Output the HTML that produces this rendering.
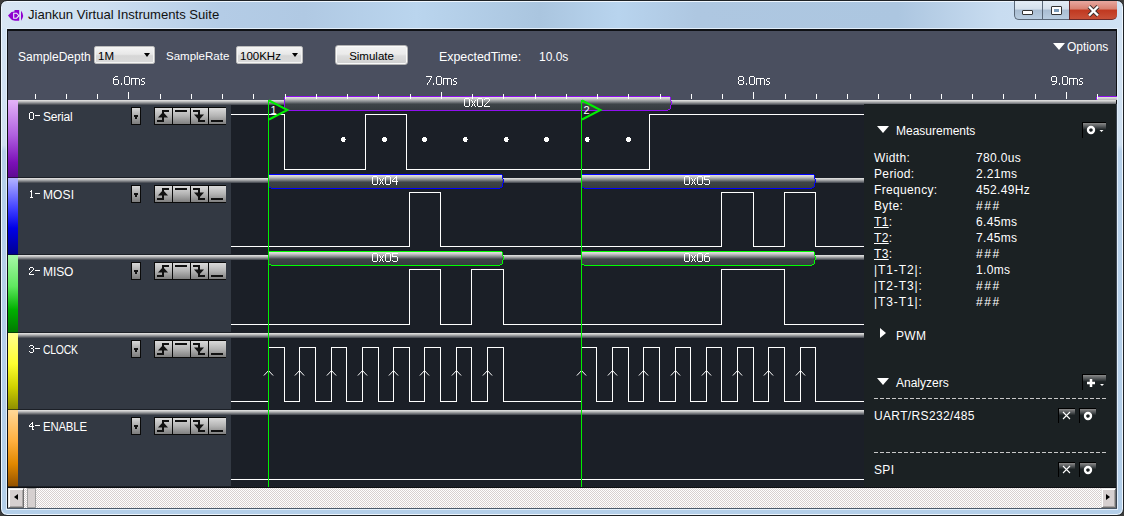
<!DOCTYPE html>
<html><head><meta charset="utf-8"><style>
*{box-sizing:border-box}
body{margin:0;width:1124px;height:516px;overflow:hidden;position:relative;background:#3c3c3c;font-family:"Liberation Sans",sans-serif}
.abs{position:absolute}
#frame{position:absolute;left:0;top:0;width:1124px;height:516px;border:1px solid #1e2226;border-radius:7px;background:linear-gradient(#d4e4f4 0,#cfe0f1 144px,#b6d0ea 150px,#b4cfe9 100%);box-shadow:inset 0 0 0 1px #eef6fe}
#tbar{position:absolute;left:2px;top:2px;width:1120px;height:26px;border-radius:5px 5px 0 0;background:linear-gradient(90deg,#d8e6f4 0%,#cddff1 9%,#b4cce6 19.5%,#b0c9e3 27%,#bad5ee 37%,#aac5df 48%,#b8d4ee 55%,#aec7e1 62%,#acc6e0 80%,#c8dcf0 89%,#d0e2f4 100%)}
#title{position:absolute;left:28px;top:7px;font-size:13.1px;color:#111;letter-spacing:0}
#content{position:absolute;left:7px;top:29px;width:1110px;height:480px;background:#0e1014;box-shadow:0 0 0 1px #e2eefa}
#tb{position:absolute;left:8px;top:31px;width:1108px;height:69px;background:#4a4f5f}
.tt{position:absolute;font-size:12px;color:#fff;white-space:nowrap}
.combo{position:absolute;height:18px;border:1px solid #bcbcbc;border-radius:2px;box-shadow:inset 0 0 0 1px #f4f4f4;background:linear-gradient(#f4f4f4,#e8e8e8 45%,#d6d6d6 55%,#dadada);font-size:11.5px;color:#000;padding-left:3px;line-height:18px}
.combo i{position:absolute;right:4px;top:6px;width:0;height:0;border-left:3.6px solid transparent;border-right:3.6px solid transparent;border-top:4.6px solid #000}
.btn{position:absolute;height:20px;border:1px solid #b4b4b4;border-radius:3px;box-shadow:inset 0 0 0 1px #fafafa;background:linear-gradient(#f2f2f2,#ebebeb 45%,#dddddd 55%,#cfcfcf);font-size:11.5px;color:#000;text-align:center;line-height:20px}
.stripe{position:absolute;left:8px;width:10px}
.lp{position:absolute;left:18px;width:213px;background:#333943}
.wf{position:absolute;left:231px;width:633px;background:#1b1f27}
.bar{position:absolute;left:18px;width:846px;height:5px;background:linear-gradient(#e6e6e6,#c8c8c8 25%,#8a8c90 60%,#3c4048)}
.lbl{position:absolute;font-size:12px;color:#fff;white-space:nowrap;line-height:14px}
.num{font-family:"Liberation Mono",monospace;font-size:11px}
.dd{position:absolute;left:131px;width:10px;height:18px;border:1px solid #0a0a0a;background:linear-gradient(#d8d8d8,#a8a8a8 50%,#7c7c7c)}
.dd i{position:absolute;left:2px;top:7px;width:4px;height:2px;background:#111}
.dd b{position:absolute;left:3px;top:9px;width:2px;height:2px;background:#111}
.bg4{position:absolute;left:154px;width:72px;height:18px;background:#0a0a0a;display:flex;padding:1px;gap:1px}
.bg4 .b{width:17px;height:16px;background:linear-gradient(#dadada,#b4b4b4 50%,#808080)}
.bg4 svg{display:block}
#rp{position:absolute;left:864px;top:104px;width:252px;height:383px;background:#1b2123}
.rt{position:absolute;font-size:12px;color:#fff;white-space:nowrap;letter-spacing:0.35px}
.hh{letter-spacing:1.6px}
.tri-d{position:absolute;width:0;height:0;border-left:6px solid transparent;border-right:6px solid transparent;border-top:7px solid #fff}
.tri-r{position:absolute;width:0;height:0;border-top:5.5px solid transparent;border-bottom:5.5px solid transparent;border-left:6px solid #fff}
.dash{position:absolute;left:874px;width:232px;height:1px;background:repeating-linear-gradient(90deg,#c8c8c8 0 4px,transparent 4px 6px)}
.sb{position:absolute;border-left:1px solid #000;border-top:1px solid #000;background:linear-gradient(#8a8a8a,#505456 25%,#1b2123 45%)}
#scroll{position:absolute;left:8px;top:488px;width:1108px;height:20px;background:repeating-conic-gradient(#fefefe 0 25%,#d8d0d0 0 50%) 0 0/2px 2px}
.sbtn{position:absolute;top:488px;width:16px;height:20px;background:#d6d0d0;border:1px solid #e8e8e8;border-right-color:#707070;border-bottom-color:#707070;box-shadow:inset 1px 1px #fff,inset -1px -1px #a8a4a4}
.st{font-family:"Liberation Sans",sans-serif;font-size:12px;fill:#fff}
.ct{font-family:"Liberation Sans",sans-serif;font-size:11px;fill:#fff}
.wb{position:absolute;top:1px;height:19px;border:1px solid #5a6878;border-top:none;border-right:none}
</style></head><body>
<div id="frame"></div><div id="tbar"></div>
<svg class="abs" style="left:6px;top:6px" width="22" height="18" viewBox="0 0 22 18"><path d="M2 9.5L4 7.5L5.5 6L8.5 5.5L8.5 4H13.2V14.8H9L6 14L4 12Z" fill="#9000d0"/><path d="M7.7 7.2V12.2H10.6L12.9 9.7L10.6 7.2Z" stroke="#e8f4f8" stroke-width="1.1" fill="#9000d0"/><path d="M15 4.8Q19.2 9.7 15 14.7Z" fill="#9000d0"/></svg>
<div id="title">Jiankun Virtual Instruments Suite</div>
<div class="wb" style="left:1014px;width:28px;background:linear-gradient(#e4edf6,#d4e0ec 45%,#a9bdd2 50%,#b9cde0);border-radius:0 0 0 5px"><div class="abs" style="left:7px;top:9px;width:11px;height:5px;background:#fff;border:1px solid #333;border-radius:1px"></div></div>
<div class="wb" style="left:1042px;width:27px;background:linear-gradient(#e4edf6,#d4e0ec 45%,#a9bdd2 50%,#b9cde0)"><div class="abs" style="left:8px;top:5px;width:11px;height:9px;background:#fff;border:1px solid #333;border-radius:1px"><div class="abs" style="left:2px;top:2px;width:5px;height:3px;background:#7a9ab8"></div></div></div>
<div class="wb" style="left:1069px;width:48px;background:linear-gradient(#e8a8a0,#d88070 45%,#c03820 50%,#c85038);border-color:#6a2a2a;border-radius:0 0 5px 0"><svg class="abs" style="left:17px;top:4px" width="13" height="12" viewBox="0 0 13 12"><path d="M2 1.5L11 10.5M11 1.5L2 10.5" stroke="#3a3030" stroke-width="4.2"/><path d="M2 1.5L11 10.5M11 1.5L2 10.5" stroke="#fff" stroke-width="2.4"/></svg></div>
<div id="content"></div>
<div id="tb"></div>
<div class="tt" style="left:18px;top:50px">SampleDepth</div>
<div class="combo" style="left:94px;top:46px;width:61px">1M<i></i></div>
<div class="tt" style="left:166px;top:50px;font-size:11.5px">SampleRate</div>
<div class="combo" style="left:236px;top:46px;width:67px">100KHz<i></i></div>
<div class="btn" style="left:335px;top:45px;width:73px">Simulate</div>
<div class="tt" style="left:439px;top:50px;font-size:12.4px">ExpectedTime:</div>
<div class="tt" style="left:539px;top:50px">10.0s</div>
<div class="tri-d" style="left:1053px;top:43px"></div>
<div class="tt" style="left:1067px;top:40px">Options</div>

<div class="stripe" style="top:100px;height:78px;background:linear-gradient(#e4b4f8,#b060e0 45%,#7c10b8 80%,#5c0a90)"></div>
<div class="lp" style="top:100px;height:78px"></div>
<div class="wf" style="top:100px;height:78px"></div>
<div class="bar" style="top:100px"></div><div class="abs" style="left:8px;top:177px;width:223px;height:1px;background:rgba(10,12,16,0.55)"></div>
<div class="lbl" style="top:110px;left:43px;letter-spacing:-0.2px">Serial</div>
<div class="dd" style="top:107px"><i></i><b></b></div>
<div class="bg4" style="top:107px">
 <div class="b"><svg width="17" height="16"><path d="M2 13H8V3H14" stroke="#111" stroke-width="2" fill="none"/><path d="M3 9.5L13 9.5L8 4Z" fill="#111"/></svg></div>
 <div class="b"><svg width="17" height="16"><rect x="2" y="2" width="12" height="2" fill="#111"/></svg></div>
 <div class="b"><svg width="17" height="16"><path d="M2 3H8V13H14" stroke="#111" stroke-width="2" fill="none"/><path d="M3 6.5L13 6.5L8 12Z" fill="#111"/></svg></div>
 <div class="b"><svg width="17" height="16"><rect x="2" y="12" width="12" height="2" fill="#111"/></svg></div>
</div>
<div class="stripe" style="top:178px;height:77px;background:linear-gradient(#b4b4ff,#4040ff 40%,#0000e8 65%,#00008c)"></div>
<div class="lp" style="top:178px;height:77px"></div>
<div class="wf" style="top:178px;height:77px"></div>
<div class="bar" style="top:178px"></div><div class="abs" style="left:8px;top:254px;width:223px;height:1px;background:rgba(10,12,16,0.55)"></div>
<div class="lbl" style="top:188px;left:43px;letter-spacing:0.1px">MOSI</div>
<div class="dd" style="top:185px"><i></i><b></b></div>
<div class="bg4" style="top:185px">
 <div class="b"><svg width="17" height="16"><path d="M2 13H8V3H14" stroke="#111" stroke-width="2" fill="none"/><path d="M3 9.5L13 9.5L8 4Z" fill="#111"/></svg></div>
 <div class="b"><svg width="17" height="16"><rect x="2" y="2" width="12" height="2" fill="#111"/></svg></div>
 <div class="b"><svg width="17" height="16"><path d="M2 3H8V13H14" stroke="#111" stroke-width="2" fill="none"/><path d="M3 6.5L13 6.5L8 12Z" fill="#111"/></svg></div>
 <div class="b"><svg width="17" height="16"><rect x="2" y="12" width="12" height="2" fill="#111"/></svg></div>
</div>
<div class="stripe" style="top:255px;height:78px;background:linear-gradient(#a8f8a8,#60e860 40%,#00b000 70%,#007800)"></div>
<div class="lp" style="top:255px;height:78px"></div>
<div class="wf" style="top:255px;height:78px"></div>
<div class="bar" style="top:255px"></div><div class="abs" style="left:8px;top:332px;width:223px;height:1px;background:rgba(10,12,16,0.55)"></div>
<div class="lbl" style="top:265px;left:43px;letter-spacing:-0.1px">MISO</div>
<div class="dd" style="top:262px"><i></i><b></b></div>
<div class="bg4" style="top:262px">
 <div class="b"><svg width="17" height="16"><path d="M2 13H8V3H14" stroke="#111" stroke-width="2" fill="none"/><path d="M3 9.5L13 9.5L8 4Z" fill="#111"/></svg></div>
 <div class="b"><svg width="17" height="16"><rect x="2" y="2" width="12" height="2" fill="#111"/></svg></div>
 <div class="b"><svg width="17" height="16"><path d="M2 3H8V13H14" stroke="#111" stroke-width="2" fill="none"/><path d="M3 6.5L13 6.5L8 12Z" fill="#111"/></svg></div>
 <div class="b"><svg width="17" height="16"><rect x="2" y="12" width="12" height="2" fill="#111"/></svg></div>
</div>
<div class="stripe" style="top:333px;height:77px;background:linear-gradient(#ffff90,#ffff30 40%,#d0d000 70%,#8c8c00)"></div>
<div class="lp" style="top:333px;height:77px"></div>
<div class="wf" style="top:333px;height:77px"></div>
<div class="bar" style="top:333px"></div><div class="abs" style="left:8px;top:409px;width:223px;height:1px;background:rgba(10,12,16,0.55)"></div>
<div class="lbl" style="top:343px;left:43px;letter-spacing:-0.3px;transform:scaleX(0.87);transform-origin:0 0">CLOCK</div>
<div class="dd" style="top:340px"><i></i><b></b></div>
<div class="bg4" style="top:340px">
 <div class="b"><svg width="17" height="16"><path d="M2 13H8V3H14" stroke="#111" stroke-width="2" fill="none"/><path d="M3 9.5L13 9.5L8 4Z" fill="#111"/></svg></div>
 <div class="b"><svg width="17" height="16"><rect x="2" y="2" width="12" height="2" fill="#111"/></svg></div>
 <div class="b"><svg width="17" height="16"><path d="M2 3H8V13H14" stroke="#111" stroke-width="2" fill="none"/><path d="M3 6.5L13 6.5L8 12Z" fill="#111"/></svg></div>
 <div class="b"><svg width="17" height="16"><rect x="2" y="12" width="12" height="2" fill="#111"/></svg></div>
</div>
<div class="stripe" style="top:410px;height:77px;background:linear-gradient(#ffd898,#ffb040 40%,#e08800 70%,#905000)"></div>
<div class="lp" style="top:410px;height:77px"></div>
<div class="wf" style="top:410px;height:77px"></div>
<div class="bar" style="top:410px"></div><div class="abs" style="left:8px;top:486px;width:223px;height:1px;background:rgba(10,12,16,0.55)"></div>
<div class="lbl" style="top:420px;left:43px;letter-spacing:-0.2px;transform:scaleX(0.95);transform-origin:0 0">ENABLE</div>
<div class="dd" style="top:417px"><i></i><b></b></div>
<div class="bg4" style="top:417px">
 <div class="b"><svg width="17" height="16"><path d="M2 13H8V3H14" stroke="#111" stroke-width="2" fill="none"/><path d="M3 9.5L13 9.5L8 4Z" fill="#111"/></svg></div>
 <div class="b"><svg width="17" height="16"><rect x="2" y="2" width="12" height="2" fill="#111"/></svg></div>
 <div class="b"><svg width="17" height="16"><path d="M2 3H8V13H14" stroke="#111" stroke-width="2" fill="none"/><path d="M3 6.5L13 6.5L8 12Z" fill="#111"/></svg></div>
 <div class="b"><svg width="17" height="16"><rect x="2" y="12" width="12" height="2" fill="#111"/></svg></div>
</div>
<div class="bar" style="top:100px;left:864px;width:252px"></div>
<div id="rp"></div>
<svg class="abs" style="left:0;top:0" width="1124" height="516">
<defs><linearGradient id="sg" x1="0" y1="0" x2="0" y2="1"><stop offset="0" stop-color="#e6e2e2"/><stop offset="0.15" stop-color="#c8c8c8"/><stop offset="0.38" stop-color="#7c8084"/><stop offset="0.55" stop-color="#3e4448"/><stop offset="1" stop-color="#353b3f"/></linearGradient>
<clipPath id="rc"><rect x="1096" y="90" width="21" height="10"/></clipPath><clipPath id="wc"><rect x="231" y="90" width="633" height="397"/></clipPath></defs>
<g clip-path="url(#wc)" shape-rendering="crispEdges"><rect x="231" y="114" width="54" height="1" fill="#fff"/><rect x="284" y="114" width="1" height="56" fill="#fff"/><rect x="284" y="169" width="82" height="1" fill="#fff"/><rect x="365" y="114" width="1" height="56" fill="#fff"/><rect x="365" y="114" width="42" height="1" fill="#fff"/><rect x="406" y="114" width="1" height="56" fill="#fff"/><rect x="406" y="169" width="244" height="1" fill="#fff"/><rect x="649" y="114" width="1" height="56" fill="#fff"/><rect x="649" y="114" width="215" height="1" fill="#fff"/><circle cx="343.4" cy="139.5" r="2.4" fill="#fff"/><circle cx="384.5" cy="139.5" r="2.4" fill="#fff"/><circle cx="424.5" cy="139.5" r="2.4" fill="#fff"/><circle cx="465.4" cy="139.5" r="2.4" fill="#fff"/><circle cx="506.4" cy="139.5" r="2.4" fill="#fff"/><circle cx="546.5" cy="139.5" r="2.4" fill="#fff"/><circle cx="587.4" cy="139.5" r="2.4" fill="#fff"/><circle cx="628.5" cy="139.5" r="2.4" fill="#fff"/><rect x="231" y="246" width="179" height="1" fill="#fff"/><rect x="409" y="192" width="1" height="55" fill="#fff"/><rect x="409" y="192" width="32" height="1" fill="#fff"/><rect x="440" y="192" width="1" height="55" fill="#fff"/><rect x="440" y="246" width="282" height="1" fill="#fff"/><rect x="721" y="192" width="1" height="55" fill="#fff"/><rect x="721" y="192" width="33" height="1" fill="#fff"/><rect x="753" y="192" width="1" height="55" fill="#fff"/><rect x="753" y="246" width="32" height="1" fill="#fff"/><rect x="784" y="192" width="1" height="55" fill="#fff"/><rect x="784" y="192" width="32" height="1" fill="#fff"/><rect x="815" y="192" width="1" height="55" fill="#fff"/><rect x="815" y="246" width="49" height="1" fill="#fff"/><rect x="231" y="324" width="179" height="1" fill="#fff"/><rect x="409" y="269" width="1" height="56" fill="#fff"/><rect x="409" y="269" width="32" height="1" fill="#fff"/><rect x="440" y="269" width="1" height="56" fill="#fff"/><rect x="440" y="324" width="32" height="1" fill="#fff"/><rect x="471" y="269" width="1" height="56" fill="#fff"/><rect x="471" y="269" width="33" height="1" fill="#fff"/><rect x="503" y="269" width="1" height="56" fill="#fff"/><rect x="503" y="324" width="219" height="1" fill="#fff"/><rect x="721" y="269" width="1" height="56" fill="#fff"/><rect x="721" y="269" width="64" height="1" fill="#fff"/><rect x="784" y="269" width="1" height="56" fill="#fff"/><rect x="784" y="324" width="80" height="1" fill="#fff"/><rect x="231" y="401" width="38" height="1" fill="#fff"/><rect x="268" y="347" width="1" height="55" fill="#fff"/><rect x="268" y="347" width="17" height="1" fill="#fff"/><rect x="284" y="347" width="1" height="55" fill="#fff"/><rect x="284" y="401" width="16" height="1" fill="#fff"/><rect x="299" y="347" width="1" height="55" fill="#fff"/><rect x="299" y="347" width="17" height="1" fill="#fff"/><rect x="315" y="347" width="1" height="55" fill="#fff"/><rect x="315" y="401" width="17" height="1" fill="#fff"/><rect x="331" y="347" width="1" height="55" fill="#fff"/><rect x="331" y="347" width="16" height="1" fill="#fff"/><rect x="346" y="347" width="1" height="55" fill="#fff"/><rect x="346" y="401" width="17" height="1" fill="#fff"/><rect x="362" y="347" width="1" height="55" fill="#fff"/><rect x="362" y="347" width="17" height="1" fill="#fff"/><rect x="378" y="347" width="1" height="55" fill="#fff"/><rect x="378" y="401" width="16" height="1" fill="#fff"/><rect x="393" y="347" width="1" height="55" fill="#fff"/><rect x="393" y="347" width="17" height="1" fill="#fff"/><rect x="409" y="347" width="1" height="55" fill="#fff"/><rect x="409" y="401" width="16" height="1" fill="#fff"/><rect x="424" y="347" width="1" height="55" fill="#fff"/><rect x="424" y="347" width="17" height="1" fill="#fff"/><rect x="440" y="347" width="1" height="55" fill="#fff"/><rect x="440" y="401" width="17" height="1" fill="#fff"/><rect x="456" y="347" width="1" height="55" fill="#fff"/><rect x="456" y="347" width="16" height="1" fill="#fff"/><rect x="471" y="347" width="1" height="55" fill="#fff"/><rect x="471" y="401" width="17" height="1" fill="#fff"/><rect x="487" y="347" width="1" height="55" fill="#fff"/><rect x="487" y="347" width="17" height="1" fill="#fff"/><rect x="503" y="347" width="1" height="55" fill="#fff"/><rect x="503" y="401" width="79" height="1" fill="#fff"/><rect x="581" y="347" width="1" height="55" fill="#fff"/><rect x="581" y="347" width="16" height="1" fill="#fff"/><rect x="596" y="347" width="1" height="55" fill="#fff"/><rect x="596" y="401" width="17" height="1" fill="#fff"/><rect x="612" y="347" width="1" height="55" fill="#fff"/><rect x="612" y="347" width="17" height="1" fill="#fff"/><rect x="628" y="347" width="1" height="55" fill="#fff"/><rect x="628" y="401" width="16" height="1" fill="#fff"/><rect x="643" y="347" width="1" height="55" fill="#fff"/><rect x="643" y="347" width="17" height="1" fill="#fff"/><rect x="659" y="347" width="1" height="55" fill="#fff"/><rect x="659" y="401" width="17" height="1" fill="#fff"/><rect x="675" y="347" width="1" height="55" fill="#fff"/><rect x="675" y="347" width="16" height="1" fill="#fff"/><rect x="690" y="347" width="1" height="55" fill="#fff"/><rect x="690" y="401" width="17" height="1" fill="#fff"/><rect x="706" y="347" width="1" height="55" fill="#fff"/><rect x="706" y="347" width="16" height="1" fill="#fff"/><rect x="721" y="347" width="1" height="55" fill="#fff"/><rect x="721" y="401" width="17" height="1" fill="#fff"/><rect x="737" y="347" width="1" height="55" fill="#fff"/><rect x="737" y="347" width="17" height="1" fill="#fff"/><rect x="753" y="347" width="1" height="55" fill="#fff"/><rect x="753" y="401" width="16" height="1" fill="#fff"/><rect x="768" y="347" width="1" height="55" fill="#fff"/><rect x="768" y="347" width="17" height="1" fill="#fff"/><rect x="784" y="347" width="1" height="55" fill="#fff"/><rect x="784" y="401" width="17" height="1" fill="#fff"/><rect x="800" y="347" width="1" height="55" fill="#fff"/><rect x="800" y="347" width="16" height="1" fill="#fff"/><rect x="815" y="347" width="1" height="55" fill="#fff"/><rect x="815" y="401" width="49" height="1" fill="#fff"/><path d="M263.9 375.5L268.5 370.6L273.1 375.5" stroke="#fff" stroke-width="1" fill="none" shape-rendering="auto"/><path d="M294.9 375.5L299.5 370.6L304.1 375.5" stroke="#fff" stroke-width="1" fill="none" shape-rendering="auto"/><path d="M326.9 375.5L331.5 370.6L336.1 375.5" stroke="#fff" stroke-width="1" fill="none" shape-rendering="auto"/><path d="M357.9 375.5L362.5 370.6L367.1 375.5" stroke="#fff" stroke-width="1" fill="none" shape-rendering="auto"/><path d="M388.9 375.5L393.5 370.6L398.1 375.5" stroke="#fff" stroke-width="1" fill="none" shape-rendering="auto"/><path d="M419.9 375.5L424.5 370.6L429.1 375.5" stroke="#fff" stroke-width="1" fill="none" shape-rendering="auto"/><path d="M451.9 375.5L456.5 370.6L461.1 375.5" stroke="#fff" stroke-width="1" fill="none" shape-rendering="auto"/><path d="M482.9 375.5L487.5 370.6L492.1 375.5" stroke="#fff" stroke-width="1" fill="none" shape-rendering="auto"/><path d="M576.9 375.5L581.5 370.6L586.1 375.5" stroke="#fff" stroke-width="1" fill="none" shape-rendering="auto"/><path d="M607.9 375.5L612.5 370.6L617.1 375.5" stroke="#fff" stroke-width="1" fill="none" shape-rendering="auto"/><path d="M638.9 375.5L643.5 370.6L648.1 375.5" stroke="#fff" stroke-width="1" fill="none" shape-rendering="auto"/><path d="M670.9 375.5L675.5 370.6L680.1 375.5" stroke="#fff" stroke-width="1" fill="none" shape-rendering="auto"/><path d="M701.9 375.5L706.5 370.6L711.1 375.5" stroke="#fff" stroke-width="1" fill="none" shape-rendering="auto"/><path d="M732.9 375.5L737.5 370.6L742.1 375.5" stroke="#fff" stroke-width="1" fill="none" shape-rendering="auto"/><path d="M763.9 375.5L768.5 370.6L773.1 375.5" stroke="#fff" stroke-width="1" fill="none" shape-rendering="auto"/><path d="M795.9 375.5L800.5 370.6L805.1 375.5" stroke="#fff" stroke-width="1" fill="none" shape-rendering="auto"/><rect x="231" y="479" width="633" height="1" fill="#fff"/><rect x="285" y="97" width="385" height="13" fill="url(#sg)"/><rect x="670" y="97" width="1" height="12" fill="url(#sg)"/><rect x="285" y="96" width="385" height="1" fill="#9010f0"/><rect x="284" y="97" width="1" height="12" fill="#9010f0"/><rect x="285" y="109" width="2" height="1" fill="#9010f0"/><rect x="287" y="110" width="381" height="1" fill="#9010f0"/><rect x="670" y="97" width="1" height="4" fill="#9010f0"/><rect x="671" y="101" width="1" height="4" fill="#9010f0"/><rect x="670" y="105" width="1" height="4" fill="#9010f0"/><rect x="668" y="109" width="2" height="1" fill="#9010f0"/><rect x="269" y="175" width="233" height="13" fill="url(#sg)"/><rect x="502" y="175" width="1" height="12" fill="url(#sg)"/><rect x="269" y="174" width="233" height="1" fill="#0000ff"/><rect x="268" y="175" width="1" height="12" fill="#0000ff"/><rect x="269" y="187" width="2" height="1" fill="#0000ff"/><rect x="271" y="188" width="229" height="1" fill="#0000ff"/><rect x="502" y="175" width="1" height="4" fill="#0000ff"/><rect x="503" y="179" width="1" height="4" fill="#0000ff"/><rect x="502" y="183" width="1" height="4" fill="#0000ff"/><rect x="500" y="187" width="2" height="1" fill="#0000ff"/><rect x="582" y="175" width="232" height="13" fill="url(#sg)"/><rect x="814" y="175" width="1" height="12" fill="url(#sg)"/><rect x="582" y="174" width="232" height="1" fill="#0000ff"/><rect x="581" y="175" width="1" height="12" fill="#0000ff"/><rect x="582" y="187" width="2" height="1" fill="#0000ff"/><rect x="584" y="188" width="228" height="1" fill="#0000ff"/><rect x="814" y="175" width="1" height="4" fill="#0000ff"/><rect x="815" y="179" width="1" height="4" fill="#0000ff"/><rect x="814" y="183" width="1" height="4" fill="#0000ff"/><rect x="812" y="187" width="2" height="1" fill="#0000ff"/><rect x="269" y="252" width="233" height="13" fill="url(#sg)"/><rect x="502" y="252" width="1" height="12" fill="url(#sg)"/><rect x="269" y="251" width="233" height="1" fill="#00ff00"/><rect x="268" y="252" width="1" height="12" fill="#00ff00"/><rect x="269" y="264" width="2" height="1" fill="#00ff00"/><rect x="271" y="265" width="229" height="1" fill="#00ff00"/><rect x="502" y="252" width="1" height="4" fill="#00ff00"/><rect x="503" y="256" width="1" height="4" fill="#00ff00"/><rect x="502" y="260" width="1" height="4" fill="#00ff00"/><rect x="500" y="264" width="2" height="1" fill="#00ff00"/><rect x="582" y="252" width="232" height="13" fill="url(#sg)"/><rect x="814" y="252" width="1" height="12" fill="url(#sg)"/><rect x="582" y="251" width="232" height="1" fill="#00ff00"/><rect x="581" y="252" width="1" height="12" fill="#00ff00"/><rect x="582" y="264" width="2" height="1" fill="#00ff00"/><rect x="584" y="265" width="228" height="1" fill="#00ff00"/><rect x="814" y="252" width="1" height="4" fill="#00ff00"/><rect x="815" y="256" width="1" height="4" fill="#00ff00"/><rect x="814" y="260" width="1" height="4" fill="#00ff00"/><rect x="812" y="264" width="2" height="1" fill="#00ff00"/><rect x="268" y="100" width="1" height="387" fill="#00f000"/><path d="M269 100.5L287.5 110L269 119.5" stroke="#00f000" stroke-width="2" fill="none" shape-rendering="auto"/><text x="270.5" y="114" class="ct">1</text><rect x="581" y="100" width="1" height="387" fill="#00f000"/><path d="M582 100.5L600.5 110L582 119.5" stroke="#00f000" stroke-width="2" fill="none" shape-rendering="auto"/><text x="583.5" y="114" class="ct">2</text></g>
<g clip-path="url(#rc)"><rect x="1097" y="97" width="42" height="13" fill="url(#sg)"/><rect x="1139" y="97" width="1" height="12" fill="url(#sg)"/><rect x="1097" y="96" width="42" height="1" fill="#9010f0"/><rect x="1096" y="97" width="1" height="12" fill="#9010f0"/><rect x="1097" y="109" width="2" height="1" fill="#9010f0"/><rect x="1099" y="110" width="38" height="1" fill="#9010f0"/><rect x="1139" y="97" width="1" height="4" fill="#9010f0"/><rect x="1140" y="101" width="1" height="4" fill="#9010f0"/><rect x="1139" y="105" width="1" height="4" fill="#9010f0"/><rect x="1137" y="109" width="2" height="1" fill="#9010f0"/></g>
<rect x="35" y="94" width="1" height="5" fill="#fff"/><rect x="66" y="94" width="1" height="5" fill="#fff"/><rect x="97" y="94" width="1" height="5" fill="#fff"/><rect x="128" y="92" width="1" height="7" fill="#fff"/><rect x="160" y="94" width="1" height="5" fill="#fff"/><rect x="191" y="94" width="1" height="5" fill="#fff"/><rect x="222" y="94" width="1" height="5" fill="#fff"/><rect x="253" y="94" width="1" height="5" fill="#fff"/><rect x="285" y="94" width="1" height="5" fill="#fff"/><rect x="316" y="94" width="1" height="5" fill="#fff"/><rect x="347" y="94" width="1" height="5" fill="#fff"/><rect x="378" y="94" width="1" height="5" fill="#fff"/><rect x="410" y="94" width="1" height="5" fill="#fff"/><rect x="441" y="92" width="1" height="7" fill="#fff"/><rect x="472" y="94" width="1" height="5" fill="#fff"/><rect x="503" y="94" width="1" height="5" fill="#fff"/><rect x="535" y="94" width="1" height="5" fill="#fff"/><rect x="566" y="94" width="1" height="5" fill="#fff"/><rect x="597" y="94" width="1" height="5" fill="#fff"/><rect x="628" y="94" width="1" height="5" fill="#fff"/><rect x="660" y="94" width="1" height="5" fill="#fff"/><rect x="691" y="94" width="1" height="5" fill="#fff"/><rect x="722" y="94" width="1" height="5" fill="#fff"/><rect x="753" y="92" width="1" height="7" fill="#fff"/><rect x="785" y="94" width="1" height="5" fill="#fff"/><rect x="816" y="94" width="1" height="5" fill="#fff"/><rect x="847" y="94" width="1" height="5" fill="#fff"/><rect x="878" y="94" width="1" height="5" fill="#fff"/><rect x="910" y="94" width="1" height="5" fill="#fff"/><rect x="941" y="94" width="1" height="5" fill="#fff"/><rect x="972" y="94" width="1" height="5" fill="#fff"/><rect x="1003" y="94" width="1" height="5" fill="#fff"/><rect x="1035" y="94" width="1" height="5" fill="#fff"/><rect x="1066" y="92" width="1" height="7" fill="#fff"/><rect x="1097" y="94" width="1" height="5" fill="#fff"/>
<g shape-rendering="crispEdges"><rect x="115" y="76" width="3" height="1" fill="#fff"/><rect x="114" y="77" width="1" height="1" fill="#fff"/><rect x="113" y="78" width="1" height="1" fill="#fff"/><rect x="113" y="79" width="5" height="1" fill="#fff"/><rect x="113" y="80" width="1" height="1" fill="#fff"/><rect x="118" y="80" width="1" height="1" fill="#fff"/><rect x="113" y="81" width="1" height="1" fill="#fff"/><rect x="118" y="81" width="1" height="1" fill="#fff"/><rect x="113" y="82" width="1" height="1" fill="#fff"/><rect x="118" y="82" width="1" height="1" fill="#fff"/><rect x="113" y="83" width="1" height="1" fill="#fff"/><rect x="118" y="83" width="1" height="1" fill="#fff"/><rect x="114" y="84" width="4" height="1" fill="#fff"/><rect x="121" y="83" width="1" height="1" fill="#fff"/><rect x="121" y="84" width="1" height="1" fill="#fff"/><rect x="125" y="76" width="4" height="1" fill="#fff"/><rect x="124" y="77" width="1" height="1" fill="#fff"/><rect x="129" y="77" width="1" height="1" fill="#fff"/><rect x="124" y="78" width="1" height="1" fill="#fff"/><rect x="129" y="78" width="1" height="1" fill="#fff"/><rect x="124" y="79" width="1" height="1" fill="#fff"/><rect x="129" y="79" width="1" height="1" fill="#fff"/><rect x="124" y="80" width="1" height="1" fill="#fff"/><rect x="129" y="80" width="1" height="1" fill="#fff"/><rect x="124" y="81" width="1" height="1" fill="#fff"/><rect x="129" y="81" width="1" height="1" fill="#fff"/><rect x="124" y="82" width="1" height="1" fill="#fff"/><rect x="129" y="82" width="1" height="1" fill="#fff"/><rect x="124" y="83" width="1" height="1" fill="#fff"/><rect x="129" y="83" width="1" height="1" fill="#fff"/><rect x="125" y="84" width="4" height="1" fill="#fff"/><rect x="131" y="78" width="8" height="1" fill="#fff"/><rect x="131" y="79" width="1" height="1" fill="#fff"/><rect x="135" y="79" width="1" height="1" fill="#fff"/><rect x="139" y="79" width="1" height="1" fill="#fff"/><rect x="131" y="80" width="1" height="1" fill="#fff"/><rect x="135" y="80" width="1" height="1" fill="#fff"/><rect x="139" y="80" width="1" height="1" fill="#fff"/><rect x="131" y="81" width="1" height="1" fill="#fff"/><rect x="135" y="81" width="1" height="1" fill="#fff"/><rect x="139" y="81" width="1" height="1" fill="#fff"/><rect x="131" y="82" width="1" height="1" fill="#fff"/><rect x="135" y="82" width="1" height="1" fill="#fff"/><rect x="139" y="82" width="1" height="1" fill="#fff"/><rect x="131" y="83" width="1" height="1" fill="#fff"/><rect x="135" y="83" width="1" height="1" fill="#fff"/><rect x="139" y="83" width="1" height="1" fill="#fff"/><rect x="131" y="84" width="1" height="1" fill="#fff"/><rect x="135" y="84" width="1" height="1" fill="#fff"/><rect x="139" y="84" width="1" height="1" fill="#fff"/><rect x="142" y="78" width="3" height="1" fill="#fff"/><rect x="141" y="79" width="1" height="1" fill="#fff"/><rect x="141" y="80" width="1" height="1" fill="#fff"/><rect x="142" y="81" width="2" height="1" fill="#fff"/><rect x="144" y="82" width="1" height="1" fill="#fff"/><rect x="144" y="83" width="1" height="1" fill="#fff"/><rect x="141" y="84" width="3" height="1" fill="#fff"/><rect x="426" y="76" width="6" height="1" fill="#fff"/><rect x="431" y="77" width="1" height="1" fill="#fff"/><rect x="430" y="78" width="1" height="1" fill="#fff"/><rect x="430" y="79" width="1" height="1" fill="#fff"/><rect x="429" y="80" width="1" height="1" fill="#fff"/><rect x="429" y="81" width="1" height="1" fill="#fff"/><rect x="428" y="82" width="1" height="1" fill="#fff"/><rect x="427" y="83" width="1" height="1" fill="#fff"/><rect x="427" y="84" width="1" height="1" fill="#fff"/><rect x="433" y="83" width="1" height="1" fill="#fff"/><rect x="433" y="84" width="1" height="1" fill="#fff"/><rect x="437" y="76" width="4" height="1" fill="#fff"/><rect x="436" y="77" width="1" height="1" fill="#fff"/><rect x="441" y="77" width="1" height="1" fill="#fff"/><rect x="436" y="78" width="1" height="1" fill="#fff"/><rect x="441" y="78" width="1" height="1" fill="#fff"/><rect x="436" y="79" width="1" height="1" fill="#fff"/><rect x="441" y="79" width="1" height="1" fill="#fff"/><rect x="436" y="80" width="1" height="1" fill="#fff"/><rect x="441" y="80" width="1" height="1" fill="#fff"/><rect x="436" y="81" width="1" height="1" fill="#fff"/><rect x="441" y="81" width="1" height="1" fill="#fff"/><rect x="436" y="82" width="1" height="1" fill="#fff"/><rect x="441" y="82" width="1" height="1" fill="#fff"/><rect x="436" y="83" width="1" height="1" fill="#fff"/><rect x="441" y="83" width="1" height="1" fill="#fff"/><rect x="437" y="84" width="4" height="1" fill="#fff"/><rect x="443" y="78" width="8" height="1" fill="#fff"/><rect x="443" y="79" width="1" height="1" fill="#fff"/><rect x="447" y="79" width="1" height="1" fill="#fff"/><rect x="451" y="79" width="1" height="1" fill="#fff"/><rect x="443" y="80" width="1" height="1" fill="#fff"/><rect x="447" y="80" width="1" height="1" fill="#fff"/><rect x="451" y="80" width="1" height="1" fill="#fff"/><rect x="443" y="81" width="1" height="1" fill="#fff"/><rect x="447" y="81" width="1" height="1" fill="#fff"/><rect x="451" y="81" width="1" height="1" fill="#fff"/><rect x="443" y="82" width="1" height="1" fill="#fff"/><rect x="447" y="82" width="1" height="1" fill="#fff"/><rect x="451" y="82" width="1" height="1" fill="#fff"/><rect x="443" y="83" width="1" height="1" fill="#fff"/><rect x="447" y="83" width="1" height="1" fill="#fff"/><rect x="451" y="83" width="1" height="1" fill="#fff"/><rect x="443" y="84" width="1" height="1" fill="#fff"/><rect x="447" y="84" width="1" height="1" fill="#fff"/><rect x="451" y="84" width="1" height="1" fill="#fff"/><rect x="454" y="78" width="3" height="1" fill="#fff"/><rect x="453" y="79" width="1" height="1" fill="#fff"/><rect x="453" y="80" width="1" height="1" fill="#fff"/><rect x="454" y="81" width="2" height="1" fill="#fff"/><rect x="456" y="82" width="1" height="1" fill="#fff"/><rect x="456" y="83" width="1" height="1" fill="#fff"/><rect x="453" y="84" width="3" height="1" fill="#fff"/><rect x="739" y="76" width="4" height="1" fill="#fff"/><rect x="738" y="77" width="1" height="1" fill="#fff"/><rect x="743" y="77" width="1" height="1" fill="#fff"/><rect x="738" y="78" width="1" height="1" fill="#fff"/><rect x="743" y="78" width="1" height="1" fill="#fff"/><rect x="738" y="79" width="1" height="1" fill="#fff"/><rect x="743" y="79" width="1" height="1" fill="#fff"/><rect x="739" y="80" width="4" height="1" fill="#fff"/><rect x="738" y="81" width="1" height="1" fill="#fff"/><rect x="743" y="81" width="1" height="1" fill="#fff"/><rect x="738" y="82" width="1" height="1" fill="#fff"/><rect x="743" y="82" width="1" height="1" fill="#fff"/><rect x="738" y="83" width="1" height="1" fill="#fff"/><rect x="743" y="83" width="1" height="1" fill="#fff"/><rect x="739" y="84" width="4" height="1" fill="#fff"/><rect x="746" y="83" width="1" height="1" fill="#fff"/><rect x="746" y="84" width="1" height="1" fill="#fff"/><rect x="750" y="76" width="4" height="1" fill="#fff"/><rect x="749" y="77" width="1" height="1" fill="#fff"/><rect x="754" y="77" width="1" height="1" fill="#fff"/><rect x="749" y="78" width="1" height="1" fill="#fff"/><rect x="754" y="78" width="1" height="1" fill="#fff"/><rect x="749" y="79" width="1" height="1" fill="#fff"/><rect x="754" y="79" width="1" height="1" fill="#fff"/><rect x="749" y="80" width="1" height="1" fill="#fff"/><rect x="754" y="80" width="1" height="1" fill="#fff"/><rect x="749" y="81" width="1" height="1" fill="#fff"/><rect x="754" y="81" width="1" height="1" fill="#fff"/><rect x="749" y="82" width="1" height="1" fill="#fff"/><rect x="754" y="82" width="1" height="1" fill="#fff"/><rect x="749" y="83" width="1" height="1" fill="#fff"/><rect x="754" y="83" width="1" height="1" fill="#fff"/><rect x="750" y="84" width="4" height="1" fill="#fff"/><rect x="756" y="78" width="8" height="1" fill="#fff"/><rect x="756" y="79" width="1" height="1" fill="#fff"/><rect x="760" y="79" width="1" height="1" fill="#fff"/><rect x="764" y="79" width="1" height="1" fill="#fff"/><rect x="756" y="80" width="1" height="1" fill="#fff"/><rect x="760" y="80" width="1" height="1" fill="#fff"/><rect x="764" y="80" width="1" height="1" fill="#fff"/><rect x="756" y="81" width="1" height="1" fill="#fff"/><rect x="760" y="81" width="1" height="1" fill="#fff"/><rect x="764" y="81" width="1" height="1" fill="#fff"/><rect x="756" y="82" width="1" height="1" fill="#fff"/><rect x="760" y="82" width="1" height="1" fill="#fff"/><rect x="764" y="82" width="1" height="1" fill="#fff"/><rect x="756" y="83" width="1" height="1" fill="#fff"/><rect x="760" y="83" width="1" height="1" fill="#fff"/><rect x="764" y="83" width="1" height="1" fill="#fff"/><rect x="756" y="84" width="1" height="1" fill="#fff"/><rect x="760" y="84" width="1" height="1" fill="#fff"/><rect x="764" y="84" width="1" height="1" fill="#fff"/><rect x="767" y="78" width="3" height="1" fill="#fff"/><rect x="766" y="79" width="1" height="1" fill="#fff"/><rect x="766" y="80" width="1" height="1" fill="#fff"/><rect x="767" y="81" width="2" height="1" fill="#fff"/><rect x="769" y="82" width="1" height="1" fill="#fff"/><rect x="769" y="83" width="1" height="1" fill="#fff"/><rect x="766" y="84" width="3" height="1" fill="#fff"/><rect x="1052" y="76" width="4" height="1" fill="#fff"/><rect x="1051" y="77" width="1" height="1" fill="#fff"/><rect x="1056" y="77" width="1" height="1" fill="#fff"/><rect x="1051" y="78" width="1" height="1" fill="#fff"/><rect x="1056" y="78" width="1" height="1" fill="#fff"/><rect x="1051" y="79" width="1" height="1" fill="#fff"/><rect x="1056" y="79" width="1" height="1" fill="#fff"/><rect x="1051" y="80" width="1" height="1" fill="#fff"/><rect x="1056" y="80" width="1" height="1" fill="#fff"/><rect x="1052" y="81" width="5" height="1" fill="#fff"/><rect x="1056" y="82" width="1" height="1" fill="#fff"/><rect x="1055" y="83" width="1" height="1" fill="#fff"/><rect x="1052" y="84" width="3" height="1" fill="#fff"/><rect x="1059" y="83" width="1" height="1" fill="#fff"/><rect x="1059" y="84" width="1" height="1" fill="#fff"/><rect x="1063" y="76" width="4" height="1" fill="#fff"/><rect x="1062" y="77" width="1" height="1" fill="#fff"/><rect x="1067" y="77" width="1" height="1" fill="#fff"/><rect x="1062" y="78" width="1" height="1" fill="#fff"/><rect x="1067" y="78" width="1" height="1" fill="#fff"/><rect x="1062" y="79" width="1" height="1" fill="#fff"/><rect x="1067" y="79" width="1" height="1" fill="#fff"/><rect x="1062" y="80" width="1" height="1" fill="#fff"/><rect x="1067" y="80" width="1" height="1" fill="#fff"/><rect x="1062" y="81" width="1" height="1" fill="#fff"/><rect x="1067" y="81" width="1" height="1" fill="#fff"/><rect x="1062" y="82" width="1" height="1" fill="#fff"/><rect x="1067" y="82" width="1" height="1" fill="#fff"/><rect x="1062" y="83" width="1" height="1" fill="#fff"/><rect x="1067" y="83" width="1" height="1" fill="#fff"/><rect x="1063" y="84" width="4" height="1" fill="#fff"/><rect x="1069" y="78" width="8" height="1" fill="#fff"/><rect x="1069" y="79" width="1" height="1" fill="#fff"/><rect x="1073" y="79" width="1" height="1" fill="#fff"/><rect x="1077" y="79" width="1" height="1" fill="#fff"/><rect x="1069" y="80" width="1" height="1" fill="#fff"/><rect x="1073" y="80" width="1" height="1" fill="#fff"/><rect x="1077" y="80" width="1" height="1" fill="#fff"/><rect x="1069" y="81" width="1" height="1" fill="#fff"/><rect x="1073" y="81" width="1" height="1" fill="#fff"/><rect x="1077" y="81" width="1" height="1" fill="#fff"/><rect x="1069" y="82" width="1" height="1" fill="#fff"/><rect x="1073" y="82" width="1" height="1" fill="#fff"/><rect x="1077" y="82" width="1" height="1" fill="#fff"/><rect x="1069" y="83" width="1" height="1" fill="#fff"/><rect x="1073" y="83" width="1" height="1" fill="#fff"/><rect x="1077" y="83" width="1" height="1" fill="#fff"/><rect x="1069" y="84" width="1" height="1" fill="#fff"/><rect x="1073" y="84" width="1" height="1" fill="#fff"/><rect x="1077" y="84" width="1" height="1" fill="#fff"/><rect x="1080" y="78" width="3" height="1" fill="#fff"/><rect x="1079" y="79" width="1" height="1" fill="#fff"/><rect x="1079" y="80" width="1" height="1" fill="#fff"/><rect x="1080" y="81" width="2" height="1" fill="#fff"/><rect x="1082" y="82" width="1" height="1" fill="#fff"/><rect x="1082" y="83" width="1" height="1" fill="#fff"/><rect x="1079" y="84" width="3" height="1" fill="#fff"/><rect x="465" y="98" width="4" height="1" fill="#fff"/><rect x="464" y="99" width="1" height="1" fill="#fff"/><rect x="469" y="99" width="1" height="1" fill="#fff"/><rect x="464" y="100" width="1" height="1" fill="#fff"/><rect x="469" y="100" width="1" height="1" fill="#fff"/><rect x="464" y="101" width="1" height="1" fill="#fff"/><rect x="469" y="101" width="1" height="1" fill="#fff"/><rect x="464" y="102" width="1" height="1" fill="#fff"/><rect x="469" y="102" width="1" height="1" fill="#fff"/><rect x="464" y="103" width="1" height="1" fill="#fff"/><rect x="469" y="103" width="1" height="1" fill="#fff"/><rect x="464" y="104" width="1" height="1" fill="#fff"/><rect x="469" y="104" width="1" height="1" fill="#fff"/><rect x="464" y="105" width="1" height="1" fill="#fff"/><rect x="469" y="105" width="1" height="1" fill="#fff"/><rect x="465" y="106" width="4" height="1" fill="#fff"/><rect x="471" y="100" width="1" height="1" fill="#fff"/><rect x="475" y="100" width="1" height="1" fill="#fff"/><rect x="472" y="101" width="1" height="1" fill="#fff"/><rect x="474" y="101" width="1" height="1" fill="#fff"/><rect x="472" y="102" width="1" height="1" fill="#fff"/><rect x="474" y="102" width="1" height="1" fill="#fff"/><rect x="473" y="103" width="1" height="1" fill="#fff"/><rect x="472" y="104" width="1" height="1" fill="#fff"/><rect x="474" y="104" width="1" height="1" fill="#fff"/><rect x="472" y="105" width="1" height="1" fill="#fff"/><rect x="474" y="105" width="1" height="1" fill="#fff"/><rect x="471" y="106" width="1" height="1" fill="#fff"/><rect x="475" y="106" width="1" height="1" fill="#fff"/><rect x="478" y="98" width="4" height="1" fill="#fff"/><rect x="477" y="99" width="1" height="1" fill="#fff"/><rect x="482" y="99" width="1" height="1" fill="#fff"/><rect x="477" y="100" width="1" height="1" fill="#fff"/><rect x="482" y="100" width="1" height="1" fill="#fff"/><rect x="477" y="101" width="1" height="1" fill="#fff"/><rect x="482" y="101" width="1" height="1" fill="#fff"/><rect x="477" y="102" width="1" height="1" fill="#fff"/><rect x="482" y="102" width="1" height="1" fill="#fff"/><rect x="477" y="103" width="1" height="1" fill="#fff"/><rect x="482" y="103" width="1" height="1" fill="#fff"/><rect x="477" y="104" width="1" height="1" fill="#fff"/><rect x="482" y="104" width="1" height="1" fill="#fff"/><rect x="477" y="105" width="1" height="1" fill="#fff"/><rect x="482" y="105" width="1" height="1" fill="#fff"/><rect x="478" y="106" width="4" height="1" fill="#fff"/><rect x="485" y="98" width="4" height="1" fill="#fff"/><rect x="484" y="99" width="1" height="1" fill="#fff"/><rect x="489" y="99" width="1" height="1" fill="#fff"/><rect x="489" y="100" width="1" height="1" fill="#fff"/><rect x="488" y="101" width="1" height="1" fill="#fff"/><rect x="487" y="102" width="1" height="1" fill="#fff"/><rect x="486" y="103" width="1" height="1" fill="#fff"/><rect x="485" y="104" width="1" height="1" fill="#fff"/><rect x="484" y="105" width="1" height="1" fill="#fff"/><rect x="484" y="106" width="6" height="1" fill="#fff"/><rect x="373" y="176" width="4" height="1" fill="#fff"/><rect x="372" y="177" width="1" height="1" fill="#fff"/><rect x="377" y="177" width="1" height="1" fill="#fff"/><rect x="372" y="178" width="1" height="1" fill="#fff"/><rect x="377" y="178" width="1" height="1" fill="#fff"/><rect x="372" y="179" width="1" height="1" fill="#fff"/><rect x="377" y="179" width="1" height="1" fill="#fff"/><rect x="372" y="180" width="1" height="1" fill="#fff"/><rect x="377" y="180" width="1" height="1" fill="#fff"/><rect x="372" y="181" width="1" height="1" fill="#fff"/><rect x="377" y="181" width="1" height="1" fill="#fff"/><rect x="372" y="182" width="1" height="1" fill="#fff"/><rect x="377" y="182" width="1" height="1" fill="#fff"/><rect x="372" y="183" width="1" height="1" fill="#fff"/><rect x="377" y="183" width="1" height="1" fill="#fff"/><rect x="373" y="184" width="4" height="1" fill="#fff"/><rect x="379" y="178" width="1" height="1" fill="#fff"/><rect x="383" y="178" width="1" height="1" fill="#fff"/><rect x="380" y="179" width="1" height="1" fill="#fff"/><rect x="382" y="179" width="1" height="1" fill="#fff"/><rect x="380" y="180" width="1" height="1" fill="#fff"/><rect x="382" y="180" width="1" height="1" fill="#fff"/><rect x="381" y="181" width="1" height="1" fill="#fff"/><rect x="380" y="182" width="1" height="1" fill="#fff"/><rect x="382" y="182" width="1" height="1" fill="#fff"/><rect x="380" y="183" width="1" height="1" fill="#fff"/><rect x="382" y="183" width="1" height="1" fill="#fff"/><rect x="379" y="184" width="1" height="1" fill="#fff"/><rect x="383" y="184" width="1" height="1" fill="#fff"/><rect x="386" y="176" width="4" height="1" fill="#fff"/><rect x="385" y="177" width="1" height="1" fill="#fff"/><rect x="390" y="177" width="1" height="1" fill="#fff"/><rect x="385" y="178" width="1" height="1" fill="#fff"/><rect x="390" y="178" width="1" height="1" fill="#fff"/><rect x="385" y="179" width="1" height="1" fill="#fff"/><rect x="390" y="179" width="1" height="1" fill="#fff"/><rect x="385" y="180" width="1" height="1" fill="#fff"/><rect x="390" y="180" width="1" height="1" fill="#fff"/><rect x="385" y="181" width="1" height="1" fill="#fff"/><rect x="390" y="181" width="1" height="1" fill="#fff"/><rect x="385" y="182" width="1" height="1" fill="#fff"/><rect x="390" y="182" width="1" height="1" fill="#fff"/><rect x="385" y="183" width="1" height="1" fill="#fff"/><rect x="390" y="183" width="1" height="1" fill="#fff"/><rect x="386" y="184" width="4" height="1" fill="#fff"/><rect x="396" y="176" width="1" height="1" fill="#fff"/><rect x="395" y="177" width="2" height="1" fill="#fff"/><rect x="394" y="178" width="1" height="1" fill="#fff"/><rect x="396" y="178" width="1" height="1" fill="#fff"/><rect x="393" y="179" width="1" height="1" fill="#fff"/><rect x="396" y="179" width="1" height="1" fill="#fff"/><rect x="392" y="180" width="1" height="1" fill="#fff"/><rect x="396" y="180" width="1" height="1" fill="#fff"/><rect x="392" y="181" width="6" height="1" fill="#fff"/><rect x="396" y="182" width="1" height="1" fill="#fff"/><rect x="396" y="183" width="1" height="1" fill="#fff"/><rect x="396" y="184" width="1" height="1" fill="#fff"/><rect x="685" y="176" width="4" height="1" fill="#fff"/><rect x="684" y="177" width="1" height="1" fill="#fff"/><rect x="689" y="177" width="1" height="1" fill="#fff"/><rect x="684" y="178" width="1" height="1" fill="#fff"/><rect x="689" y="178" width="1" height="1" fill="#fff"/><rect x="684" y="179" width="1" height="1" fill="#fff"/><rect x="689" y="179" width="1" height="1" fill="#fff"/><rect x="684" y="180" width="1" height="1" fill="#fff"/><rect x="689" y="180" width="1" height="1" fill="#fff"/><rect x="684" y="181" width="1" height="1" fill="#fff"/><rect x="689" y="181" width="1" height="1" fill="#fff"/><rect x="684" y="182" width="1" height="1" fill="#fff"/><rect x="689" y="182" width="1" height="1" fill="#fff"/><rect x="684" y="183" width="1" height="1" fill="#fff"/><rect x="689" y="183" width="1" height="1" fill="#fff"/><rect x="685" y="184" width="4" height="1" fill="#fff"/><rect x="691" y="178" width="1" height="1" fill="#fff"/><rect x="695" y="178" width="1" height="1" fill="#fff"/><rect x="692" y="179" width="1" height="1" fill="#fff"/><rect x="694" y="179" width="1" height="1" fill="#fff"/><rect x="692" y="180" width="1" height="1" fill="#fff"/><rect x="694" y="180" width="1" height="1" fill="#fff"/><rect x="693" y="181" width="1" height="1" fill="#fff"/><rect x="692" y="182" width="1" height="1" fill="#fff"/><rect x="694" y="182" width="1" height="1" fill="#fff"/><rect x="692" y="183" width="1" height="1" fill="#fff"/><rect x="694" y="183" width="1" height="1" fill="#fff"/><rect x="691" y="184" width="1" height="1" fill="#fff"/><rect x="695" y="184" width="1" height="1" fill="#fff"/><rect x="698" y="176" width="4" height="1" fill="#fff"/><rect x="697" y="177" width="1" height="1" fill="#fff"/><rect x="702" y="177" width="1" height="1" fill="#fff"/><rect x="697" y="178" width="1" height="1" fill="#fff"/><rect x="702" y="178" width="1" height="1" fill="#fff"/><rect x="697" y="179" width="1" height="1" fill="#fff"/><rect x="702" y="179" width="1" height="1" fill="#fff"/><rect x="697" y="180" width="1" height="1" fill="#fff"/><rect x="702" y="180" width="1" height="1" fill="#fff"/><rect x="697" y="181" width="1" height="1" fill="#fff"/><rect x="702" y="181" width="1" height="1" fill="#fff"/><rect x="697" y="182" width="1" height="1" fill="#fff"/><rect x="702" y="182" width="1" height="1" fill="#fff"/><rect x="697" y="183" width="1" height="1" fill="#fff"/><rect x="702" y="183" width="1" height="1" fill="#fff"/><rect x="698" y="184" width="4" height="1" fill="#fff"/><rect x="704" y="176" width="6" height="1" fill="#fff"/><rect x="704" y="177" width="1" height="1" fill="#fff"/><rect x="704" y="178" width="1" height="1" fill="#fff"/><rect x="704" y="179" width="5" height="1" fill="#fff"/><rect x="709" y="180" width="1" height="1" fill="#fff"/><rect x="709" y="181" width="1" height="1" fill="#fff"/><rect x="709" y="182" width="1" height="1" fill="#fff"/><rect x="704" y="183" width="1" height="1" fill="#fff"/><rect x="709" y="183" width="1" height="1" fill="#fff"/><rect x="705" y="184" width="4" height="1" fill="#fff"/><rect x="373" y="253" width="4" height="1" fill="#fff"/><rect x="372" y="254" width="1" height="1" fill="#fff"/><rect x="377" y="254" width="1" height="1" fill="#fff"/><rect x="372" y="255" width="1" height="1" fill="#fff"/><rect x="377" y="255" width="1" height="1" fill="#fff"/><rect x="372" y="256" width="1" height="1" fill="#fff"/><rect x="377" y="256" width="1" height="1" fill="#fff"/><rect x="372" y="257" width="1" height="1" fill="#fff"/><rect x="377" y="257" width="1" height="1" fill="#fff"/><rect x="372" y="258" width="1" height="1" fill="#fff"/><rect x="377" y="258" width="1" height="1" fill="#fff"/><rect x="372" y="259" width="1" height="1" fill="#fff"/><rect x="377" y="259" width="1" height="1" fill="#fff"/><rect x="372" y="260" width="1" height="1" fill="#fff"/><rect x="377" y="260" width="1" height="1" fill="#fff"/><rect x="373" y="261" width="4" height="1" fill="#fff"/><rect x="379" y="255" width="1" height="1" fill="#fff"/><rect x="383" y="255" width="1" height="1" fill="#fff"/><rect x="380" y="256" width="1" height="1" fill="#fff"/><rect x="382" y="256" width="1" height="1" fill="#fff"/><rect x="380" y="257" width="1" height="1" fill="#fff"/><rect x="382" y="257" width="1" height="1" fill="#fff"/><rect x="381" y="258" width="1" height="1" fill="#fff"/><rect x="380" y="259" width="1" height="1" fill="#fff"/><rect x="382" y="259" width="1" height="1" fill="#fff"/><rect x="380" y="260" width="1" height="1" fill="#fff"/><rect x="382" y="260" width="1" height="1" fill="#fff"/><rect x="379" y="261" width="1" height="1" fill="#fff"/><rect x="383" y="261" width="1" height="1" fill="#fff"/><rect x="386" y="253" width="4" height="1" fill="#fff"/><rect x="385" y="254" width="1" height="1" fill="#fff"/><rect x="390" y="254" width="1" height="1" fill="#fff"/><rect x="385" y="255" width="1" height="1" fill="#fff"/><rect x="390" y="255" width="1" height="1" fill="#fff"/><rect x="385" y="256" width="1" height="1" fill="#fff"/><rect x="390" y="256" width="1" height="1" fill="#fff"/><rect x="385" y="257" width="1" height="1" fill="#fff"/><rect x="390" y="257" width="1" height="1" fill="#fff"/><rect x="385" y="258" width="1" height="1" fill="#fff"/><rect x="390" y="258" width="1" height="1" fill="#fff"/><rect x="385" y="259" width="1" height="1" fill="#fff"/><rect x="390" y="259" width="1" height="1" fill="#fff"/><rect x="385" y="260" width="1" height="1" fill="#fff"/><rect x="390" y="260" width="1" height="1" fill="#fff"/><rect x="386" y="261" width="4" height="1" fill="#fff"/><rect x="392" y="253" width="6" height="1" fill="#fff"/><rect x="392" y="254" width="1" height="1" fill="#fff"/><rect x="392" y="255" width="1" height="1" fill="#fff"/><rect x="392" y="256" width="5" height="1" fill="#fff"/><rect x="397" y="257" width="1" height="1" fill="#fff"/><rect x="397" y="258" width="1" height="1" fill="#fff"/><rect x="397" y="259" width="1" height="1" fill="#fff"/><rect x="392" y="260" width="1" height="1" fill="#fff"/><rect x="397" y="260" width="1" height="1" fill="#fff"/><rect x="393" y="261" width="4" height="1" fill="#fff"/><rect x="685" y="253" width="4" height="1" fill="#fff"/><rect x="684" y="254" width="1" height="1" fill="#fff"/><rect x="689" y="254" width="1" height="1" fill="#fff"/><rect x="684" y="255" width="1" height="1" fill="#fff"/><rect x="689" y="255" width="1" height="1" fill="#fff"/><rect x="684" y="256" width="1" height="1" fill="#fff"/><rect x="689" y="256" width="1" height="1" fill="#fff"/><rect x="684" y="257" width="1" height="1" fill="#fff"/><rect x="689" y="257" width="1" height="1" fill="#fff"/><rect x="684" y="258" width="1" height="1" fill="#fff"/><rect x="689" y="258" width="1" height="1" fill="#fff"/><rect x="684" y="259" width="1" height="1" fill="#fff"/><rect x="689" y="259" width="1" height="1" fill="#fff"/><rect x="684" y="260" width="1" height="1" fill="#fff"/><rect x="689" y="260" width="1" height="1" fill="#fff"/><rect x="685" y="261" width="4" height="1" fill="#fff"/><rect x="691" y="255" width="1" height="1" fill="#fff"/><rect x="695" y="255" width="1" height="1" fill="#fff"/><rect x="692" y="256" width="1" height="1" fill="#fff"/><rect x="694" y="256" width="1" height="1" fill="#fff"/><rect x="692" y="257" width="1" height="1" fill="#fff"/><rect x="694" y="257" width="1" height="1" fill="#fff"/><rect x="693" y="258" width="1" height="1" fill="#fff"/><rect x="692" y="259" width="1" height="1" fill="#fff"/><rect x="694" y="259" width="1" height="1" fill="#fff"/><rect x="692" y="260" width="1" height="1" fill="#fff"/><rect x="694" y="260" width="1" height="1" fill="#fff"/><rect x="691" y="261" width="1" height="1" fill="#fff"/><rect x="695" y="261" width="1" height="1" fill="#fff"/><rect x="698" y="253" width="4" height="1" fill="#fff"/><rect x="697" y="254" width="1" height="1" fill="#fff"/><rect x="702" y="254" width="1" height="1" fill="#fff"/><rect x="697" y="255" width="1" height="1" fill="#fff"/><rect x="702" y="255" width="1" height="1" fill="#fff"/><rect x="697" y="256" width="1" height="1" fill="#fff"/><rect x="702" y="256" width="1" height="1" fill="#fff"/><rect x="697" y="257" width="1" height="1" fill="#fff"/><rect x="702" y="257" width="1" height="1" fill="#fff"/><rect x="697" y="258" width="1" height="1" fill="#fff"/><rect x="702" y="258" width="1" height="1" fill="#fff"/><rect x="697" y="259" width="1" height="1" fill="#fff"/><rect x="702" y="259" width="1" height="1" fill="#fff"/><rect x="697" y="260" width="1" height="1" fill="#fff"/><rect x="702" y="260" width="1" height="1" fill="#fff"/><rect x="698" y="261" width="4" height="1" fill="#fff"/><rect x="706" y="253" width="3" height="1" fill="#fff"/><rect x="705" y="254" width="1" height="1" fill="#fff"/><rect x="704" y="255" width="1" height="1" fill="#fff"/><rect x="704" y="256" width="5" height="1" fill="#fff"/><rect x="704" y="257" width="1" height="1" fill="#fff"/><rect x="709" y="257" width="1" height="1" fill="#fff"/><rect x="704" y="258" width="1" height="1" fill="#fff"/><rect x="709" y="258" width="1" height="1" fill="#fff"/><rect x="704" y="259" width="1" height="1" fill="#fff"/><rect x="709" y="259" width="1" height="1" fill="#fff"/><rect x="704" y="260" width="1" height="1" fill="#fff"/><rect x="709" y="260" width="1" height="1" fill="#fff"/><rect x="705" y="261" width="4" height="1" fill="#fff"/><rect x="30" y="112" width="3" height="1" fill="#fff"/><rect x="29" y="113" width="1" height="1" fill="#fff"/><rect x="33" y="113" width="1" height="1" fill="#fff"/><rect x="29" y="114" width="1" height="1" fill="#fff"/><rect x="33" y="114" width="1" height="1" fill="#fff"/><rect x="29" y="115" width="1" height="1" fill="#fff"/><rect x="33" y="115" width="1" height="1" fill="#fff"/><rect x="29" y="116" width="1" height="1" fill="#fff"/><rect x="33" y="116" width="1" height="1" fill="#fff"/><rect x="29" y="117" width="1" height="1" fill="#fff"/><rect x="33" y="117" width="1" height="1" fill="#fff"/><rect x="29" y="118" width="1" height="1" fill="#fff"/><rect x="33" y="118" width="1" height="1" fill="#fff"/><rect x="30" y="119" width="3" height="1" fill="#fff"/><rect x="35" y="115" width="5" height="1" fill="#fff"/><rect x="31" y="190" width="1" height="1" fill="#fff"/><rect x="30" y="191" width="2" height="1" fill="#fff"/><rect x="31" y="192" width="1" height="1" fill="#fff"/><rect x="31" y="193" width="1" height="1" fill="#fff"/><rect x="31" y="194" width="1" height="1" fill="#fff"/><rect x="31" y="195" width="1" height="1" fill="#fff"/><rect x="31" y="196" width="1" height="1" fill="#fff"/><rect x="30" y="197" width="3" height="1" fill="#fff"/><rect x="35" y="193" width="5" height="1" fill="#fff"/><rect x="30" y="267" width="3" height="1" fill="#fff"/><rect x="29" y="268" width="1" height="1" fill="#fff"/><rect x="33" y="268" width="1" height="1" fill="#fff"/><rect x="29" y="269" width="1" height="1" fill="#fff"/><rect x="33" y="269" width="1" height="1" fill="#fff"/><rect x="32" y="270" width="1" height="1" fill="#fff"/><rect x="31" y="271" width="1" height="1" fill="#fff"/><rect x="30" y="272" width="1" height="1" fill="#fff"/><rect x="29" y="273" width="1" height="1" fill="#fff"/><rect x="29" y="274" width="5" height="1" fill="#fff"/><rect x="35" y="270" width="5" height="1" fill="#fff"/><rect x="30" y="345" width="3" height="1" fill="#fff"/><rect x="29" y="346" width="1" height="1" fill="#fff"/><rect x="33" y="346" width="1" height="1" fill="#fff"/><rect x="33" y="347" width="1" height="1" fill="#fff"/><rect x="31" y="348" width="2" height="1" fill="#fff"/><rect x="33" y="349" width="1" height="1" fill="#fff"/><rect x="33" y="350" width="1" height="1" fill="#fff"/><rect x="29" y="351" width="1" height="1" fill="#fff"/><rect x="33" y="351" width="1" height="1" fill="#fff"/><rect x="30" y="352" width="3" height="1" fill="#fff"/><rect x="35" y="348" width="5" height="1" fill="#fff"/><rect x="32" y="422" width="1" height="1" fill="#fff"/><rect x="31" y="423" width="2" height="1" fill="#fff"/><rect x="30" y="424" width="1" height="1" fill="#fff"/><rect x="32" y="424" width="1" height="1" fill="#fff"/><rect x="29" y="425" width="1" height="1" fill="#fff"/><rect x="32" y="425" width="1" height="1" fill="#fff"/><rect x="29" y="426" width="5" height="1" fill="#fff"/><rect x="32" y="427" width="1" height="1" fill="#fff"/><rect x="32" y="428" width="1" height="1" fill="#fff"/><rect x="32" y="429" width="2" height="1" fill="#fff"/><rect x="35" y="425" width="5" height="1" fill="#fff"/></g>
</svg>
<div class="tri-d" style="left:877px;top:126px"></div>
<div class="rt" style="left:896px;top:124px;letter-spacing:0">Measurements</div>
<div class="sb" style="left:1082px;top:122px;width:24px;height:16px"><svg class="abs" style="left:3px;top:2px" width="20" height="11"><circle cx="5" cy="5" r="3" stroke="#fff" stroke-width="2.4" fill="none"/><path d="M13.5 5h4l-2 2z" fill="#fff"/></svg></div>
<div class="rt" style="left:874px;top:150px;line-height:16px">Width:<br>Period:<br>Frequency:<br>Byte:<br><u>T1</u>:<br><u>T2</u>:<br><u>T3</u>:<br><span style="letter-spacing:0.9px">|T1-T2|:<br>|T2-T3|:<br>|T3-T1|:</span></div>
<div class="rt" style="left:976px;top:150px;line-height:16px">780.0us<br>2.21ms<br>452.49Hz<br><span class="hh">###</span><br>6.45ms<br>7.45ms<br><span class="hh">###</span><br>1.0ms<br><span class="hh">###</span><br><span class="hh">###</span></div>
<div class="tri-r" style="left:880px;top:328px"></div>
<div class="rt" style="left:896px;top:329px">PWM</div>
<div class="tri-d" style="left:877px;top:378px"></div>
<div class="rt" style="left:896px;top:376px;letter-spacing:0">Analyzers</div>
<div class="sb" style="left:1082px;top:374px;width:24px;height:16px"><svg class="abs" style="left:3px;top:2px" width="22" height="13"><path d="M1 6h8M5 2v8" stroke="#fff" stroke-width="2.5"/><path d="M14 7h4l-2 2z" fill="#fff"/></svg></div>
<div class="dash" style="top:398px"></div>
<div class="rt" style="left:874px;top:409px">UART/RS232/485</div>
<div class="sb" style="left:1058px;top:408px;width:17px;height:15px"><svg class="abs" style="left:3px;top:2px" width="10" height="10"><path d="M1 1L8 8M8 1L1 8" stroke="#fff" stroke-width="1.1"/></svg></div>
<div class="sb" style="left:1079px;top:408px;width:17px;height:15px"><svg class="abs" style="left:3px;top:2px" width="10" height="10"><circle cx="5" cy="5" r="3" stroke="#fff" stroke-width="2.4" fill="none"/></svg></div>
<div class="dash" style="top:452px"></div>
<div class="rt" style="left:874px;top:463px">SPI</div>
<div class="sb" style="left:1058px;top:462px;width:17px;height:15px"><svg class="abs" style="left:3px;top:2px" width="10" height="10"><path d="M1 1L8 8M8 1L1 8" stroke="#fff" stroke-width="1.1"/></svg></div>
<div class="sb" style="left:1079px;top:462px;width:17px;height:15px"><svg class="abs" style="left:3px;top:2px" width="10" height="10"><circle cx="5" cy="5" r="3" stroke="#fff" stroke-width="2.4" fill="none"/></svg></div>
<div id="scroll"></div><div class="abs" style="left:7px;top:508px;width:1110px;height:1px;background:#4a5868"></div><div class="abs" style="left:1116px;top:104px;width:1px;height:404px;background:#3a4450"></div>
<div class="sbtn" style="left:8px"><div class="abs" style="left:5px;top:5px;border-top:3.5px solid transparent;border-bottom:3.5px solid transparent;border-right:4.5px solid #000"></div></div>
<div class="sbtn" style="left:27px;width:9px;box-shadow:none;border-color:#a0a0a0"></div>
<div class="sbtn" style="left:1101px;width:15px"><div class="abs" style="left:4px;top:5px;border-top:3.5px solid transparent;border-bottom:3.5px solid transparent;border-left:4.5px solid #000"></div></div>
</body></html>
